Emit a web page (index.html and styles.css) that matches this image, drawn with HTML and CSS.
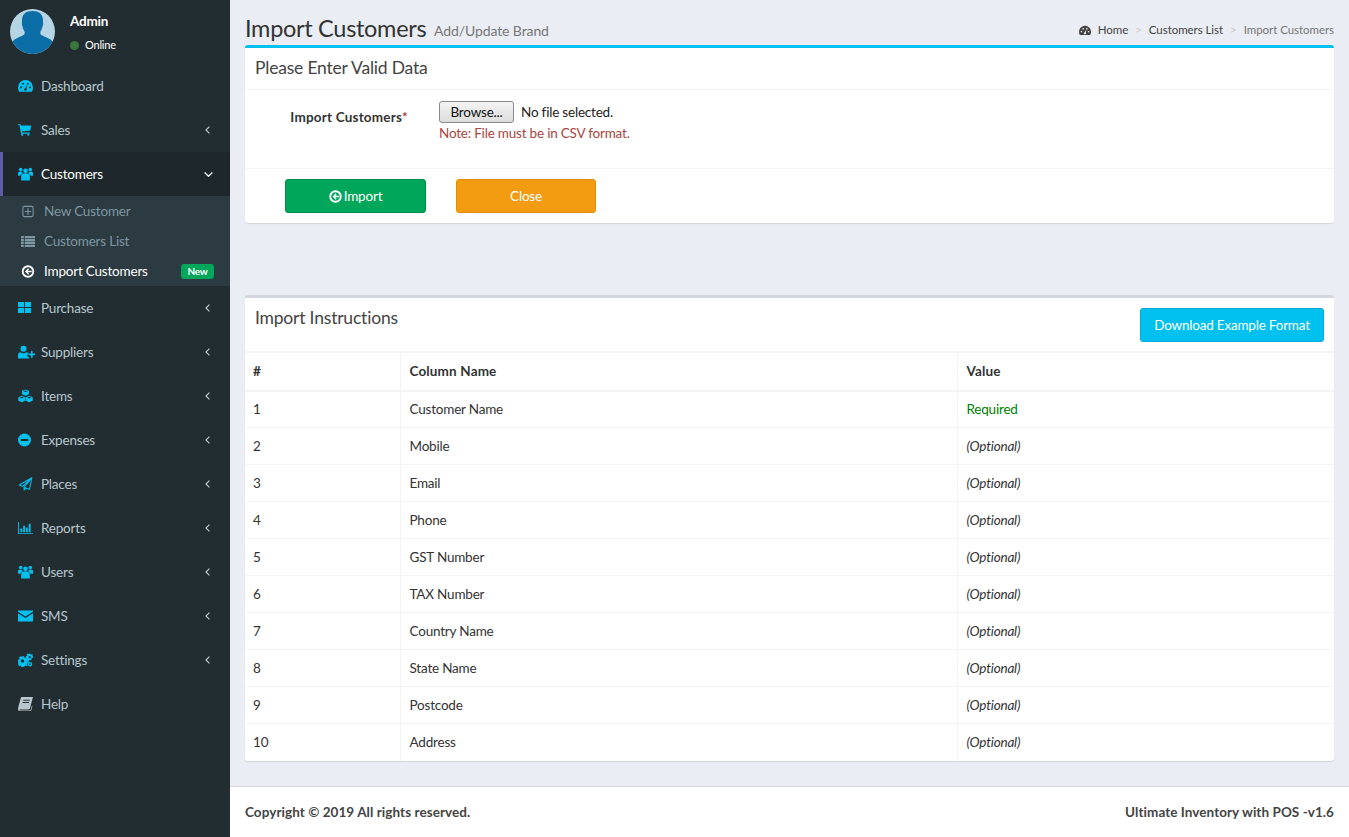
FILE: index.html
```html
<!DOCTYPE html>
<html lang="en">
<head>
    <meta charset="UTF-8">
    <meta name="viewport" content="width=device-width, initial-scale=1.0">
    <title>Import Customers</title>
    <link rel="stylesheet" href="styles.css">
</head>
<body>

    <!-- icon sprite -->
    <svg class="sprite" xmlns="http://www.w3.org/2000/svg">
        <symbol id="i-dash" viewBox="0 0 16 14"><path fill-rule="evenodd" d="M8 .5A8 8 0 0 0 0 8.500c0 1.700.4 3.200 1.100 4.500h13.800c.7-1.300 1.100-2.800 1.100-4.500a8 8 0 0 0-8-8zM2.400 7.600h1.800v1.800H2.400zM4.600 3.700h1.800v1.800H4.600zM9.600 3.700h1.800v1.800H9.600zM11.800 7.600h1.800v1.800h-1.800zM6.600 11.200c.5 1 2.200 1 2.700 0 .3-.6.100-1.100-.2-1.500L10 5 7.700 9.300c-.8 0-1.500 1-1.100 1.900z"/></symbol>
        <symbol id="i-cart" viewBox="0 -1 18 16"><path d="M0 0h3l.5 1.600H16l-1.200 6L4.600 8.700l.3 1.300H14v1.400H3.600L1.800 1.400H0z"/><circle cx="5" cy="12.700" r="1.300"/><circle cx="12.400" cy="12.700" r="1.300"/></symbol>
        <symbol id="i-users" viewBox="0 0 16 14"><circle cx="8" cy="3.600" r="2.500"/><circle cx="2.900" cy="2.300" r="1.900"/><circle cx="13.100" cy="2.300" r="1.900"/><path d="M3.400 13.800V9c0-1.500 1-2.600 2.400-2.600h4.400c1.400 0 2.400 1.100 2.400 2.600v4.800z"/><path d="M0 8.800V6c0-1 .7-1.500 1.600-1.500h2.500c.3 .8.700 1.300 1.200 1.600-1.500.5-2.500 1.500-2.600 2.700zM16 8.800V6c0-1-.7-1.500-1.600-1.500h-2.500c-.3 .8-.7 1.300-1.200 1.600 1.500.5 2.500 1.500 2.600 2.700z"/></symbol>
        <symbol id="i-plus-o" viewBox="-1 -1 16 16"><rect x=".7" y=".7" width="12.600" height="12.600" rx="2" fill="none" stroke="currentColor" stroke-width="1.300"/><path d="M6.300 3h1.400v3.300H11v1.400H7.700V11H6.300V7.700H3V6.300h3.300z"/></symbol>
        <symbol id="i-list" viewBox="0 0 15 12"><path d="M0 0h3v2.400H0zM4 0h11v2.400H4zM0 3.200h3v2.400H0zM4 3.200h11v2.400H4zM0 6.400h3v2.400H0zM4 6.400h11v2.400H4zM0 9.600h3V12H0zM4 9.600h11V12H4z"/></symbol>
        <symbol id="i-back" viewBox="0 0 14 14"><circle cx="7" cy="7" r="5.700" fill="none" stroke="currentColor" stroke-width="2"/><path d="M7.200 3.600l1 1-1.500 1.500H11v1.800H6.700l1.500 1.500-1 1L3.800 7z"/></symbol>
        <symbol id="i-grid" viewBox="0 -1 15 14"><path d="M0 0h6.100v5.100H0zM7 0h6.100v5.100H7zM0 6h6.100v5.100H0zM7 6h6.100v5.100H7z"/></symbol>
        <symbol id="i-user-plus" viewBox="0 0 17 13"><circle cx="5.500" cy="3.200" r="3"/><path d="M0 13V9.500c0-1.700 1-2.800 2.500-2.800.8.600 1.800 1 3 1s2.200-.4 3-1c1.100 0 2 .6 2.400 1.600H9.500v3h1.500V13z"/><path d="M13 5.500h1.600v2.600H17v1.600h-2.400v2.600H13V9.700h-2.600V8.100H13z"/></symbol>
        <symbol id="i-cubes" viewBox="0 0 16 14"><path fill-rule="evenodd" d="M8 0l3.700 1.500v3.700L8 6.800 4.300 5.200V1.500zM8 1L5.700 1.900 8 2.800l2.300-.9zM4 6.800l3.700 1.500V12L4 13.600.3 12V8.300zM4 7.800l-2.300.9 2.300.9 2.300-.9zM12 6.800l3.700 1.500V12L12 13.600 8.300 12V8.300zM12 7.800l-2.300.9 2.300.9 2.300-.9z"/></symbol>
        <symbol id="i-minus" viewBox="0 -.5 15 14"><path fill-rule="evenodd" d="M6.500 0a6.500 6.500 0 1 0 0 13 6.500 6.500 0 0 0 0-13zM2.800 5.400h7.400v2.200H2.800z"/></symbol>
        <symbol id="i-plane" viewBox="0 0 15 15"><path fill="none" stroke="currentColor" stroke-width="1.100" stroke-linejoin="round" d="M14.300.8L.8 8.600l3.700 1.500L14.300.8 6 11l5.800 2.300zM6 11v3l1.800-2.200"/></symbol>
        <symbol id="i-bars" viewBox="0 0 16 13"><path d="M0 0h1v12h15v1H0z"/><path d="M2.500 7h2v4h-2zM5.500 4h2v7h-2zM8.500 6h2v5h-2zM11.500 2h2v9h-2z"/></symbol>
        <symbol id="i-mail" viewBox="0 0 15 11"><path d="M0 0h15v1.300L7.500 6 0 1.300zM0 2.800l7.500 4.700L15 2.800V11H0z"/></symbol>
        <symbol id="i-cogs" viewBox="0 0 16 14"><path fill-rule="evenodd" d="M5.500 3l1 .1.400 1.200 1 .5 1.100-.6 1.300 1.300-.6 1.100.5 1 1.200.4v1.800l-1.200.4-.5 1 .6 1.100-1.300 1.300-1.100-.6-1 .5-.4 1.200H3.700l-.4-1.200-1-.5-1.100.6L-.1 11.300l.6-1.100-.5-1L0 8.900V7.100l.1-.3 1.100-.4.5-1-.6-1.100L2.400 3l1.100.6 1-.5zM4.700 6.200a1.800 1.800 0 1 0 0 3.600 1.800 1.800 0 0 0 0-3.600z"/><path fill-rule="evenodd" d="M13 0l.4 1 .9.100.7-.6.800.8-.6.9.3.8L16 3.300v1.200l-1.500.3-.3.8.6.9-.8.8-.9-.6-.8.3-.3 1h-1.200l-.3-1-.8-.3-.7.5-.9-.8.6-.9-.3-.8L8.500 3.600V3l1.100-.4.3-.8-.6-.9.8-.8.9.6.8-.3L12 0zM12.500 2.800a1.100 1.100 0 1 0 0 2.200 1.100 1.100 0 0 0 0-2.200zM12.800 9a2.400 2.400 0 1 0 0 4.800 2.400 2.400 0 0 0 0-4.800zM12.800 10.500a.9.9 0 1 1 0 1.800.9.9 0 0 1 0-1.800z"/></symbol>
        <symbol id="i-book" viewBox="0 0 14 13"><path fill-rule="evenodd" d="M3.500 0H14l-.3 1-2.500 9.500c-.2.8-.8 1.100-1.500 1.100H2c-.5 0-.9.300-.8.600.1.200.3.300.8.300h9.600l1.100-4 .8-.2-1.600 5.700H1.800C.7 13.100 0 12.200 0 11c0-.2 0-.5.100-.7L2.600 1C2.700.5 3 0 3.500 0zM5 2.600l-.2.800h6l.2-.8zM4.400 4.700l-.2.800h6l.2-.8z"/></symbol>
        <symbol id="i-left" viewBox="0 0 5 8"><path d="M4.400 .6L1 4l3.400 3.400" fill="none" stroke="currentColor" stroke-width="1.200"/></symbol>
        <symbol id="i-down" viewBox="0 0 9 5"><path d="M.6 .6L4.500 4.200 8.400 .6" fill="none" stroke="currentColor" stroke-width="1.300"/></symbol>
    </svg>

    <div class="wrapper">
        <aside class="sidebar">
            <div class="user-panel">
                <svg class="avatar" viewBox="0 0 45 45">
                    <circle cx="22.500" cy="22.500" r="22.500" fill="#b5d4e4"/>
                    <path fill="#0b6ea6" d="M22.500 2c6.500 0 10.500 3 10.500 9.500 0 3 .5 4-.5 6-.5 2-1 3.500-2 5-.5 1.500 0 3 1 3.500 2 1.500 6 2.500 9 4.500 .8 .6 1.400 1.500 1.900 2.500A22.500 22.500 0 0 1 2.600 33c.5-1 1.100-1.900 1.900-2.500 3-2 7-3 9-4.500 1-.5 1.500-2 1-3.500-1-1.500-1.500-3-2-5-1-2-.5-3-.5-6 0-6.500 4-9.500 10.500-9.500z"/>
                </svg>
                <div class="user-info">
                    <div class="user-name">Admin</div>
                    <div class="user-status"><span class="dot"></span>Online</div>
                </div>
            </div>

            <ul class="menu">
                <li class="menu-item"><svg class="icon"><use href="#i-dash"/></svg><span class="label">Dashboard</span></li>
                <li class="menu-item"><svg class="icon"><use href="#i-cart"/></svg><span class="label">Sales</span><svg class="chev"><use href="#i-left"/></svg></li>
                <li class="menu-item active"><svg class="icon"><use href="#i-users"/></svg><span class="label">Customers</span><svg class="chev-down"><use href="#i-down"/></svg></li>
                <li>
                    <ul class="submenu">
                        <li class="sub-item"><svg class="sub-icon"><use href="#i-plus-o"/></svg><span class="label">New Customer</span></li>
                        <li class="sub-item"><svg class="sub-icon"><use href="#i-list"/></svg><span class="label">Customers List</span></li>
                        <li class="sub-item current"><svg class="sub-icon"><use href="#i-back"/></svg><span class="label">Import Customers</span><span class="badge">New</span></li>
                    </ul>
                </li>
                <li class="menu-item"><svg class="icon"><use href="#i-grid"/></svg><span class="label">Purchase</span><svg class="chev"><use href="#i-left"/></svg></li>
                <li class="menu-item"><svg class="icon icon-wide"><use href="#i-user-plus"/></svg><span class="label">Suppliers</span><svg class="chev"><use href="#i-left"/></svg></li>
                <li class="menu-item"><svg class="icon"><use href="#i-cubes"/></svg><span class="label">Items</span><svg class="chev"><use href="#i-left"/></svg></li>
                <li class="menu-item"><svg class="icon"><use href="#i-minus"/></svg><span class="label">Expenses</span><svg class="chev"><use href="#i-left"/></svg></li>
                <li class="menu-item"><svg class="icon"><use href="#i-plane"/></svg><span class="label">Places</span><svg class="chev"><use href="#i-left"/></svg></li>
                <li class="menu-item"><svg class="icon"><use href="#i-bars"/></svg><span class="label">Reports</span><svg class="chev"><use href="#i-left"/></svg></li>
                <li class="menu-item"><svg class="icon"><use href="#i-users"/></svg><span class="label">Users</span><svg class="chev"><use href="#i-left"/></svg></li>
                <li class="menu-item"><svg class="icon"><use href="#i-mail"/></svg><span class="label">SMS</span><svg class="chev"><use href="#i-left"/></svg></li>
                <li class="menu-item"><svg class="icon"><use href="#i-cogs"/></svg><span class="label">Settings</span><svg class="chev"><use href="#i-left"/></svg></li>
                <li class="menu-item help"><svg class="icon"><use href="#i-book"/></svg><span class="label">Help</span></li>
            </ul>
        </aside>

        <div class="main">
            <div class="content">
                <div class="content-header">
                    <h1>Import Customers <small>Add/Update Brand</small></h1>
                    <div class="breadcrumb">
                        <svg class="crumb-icon"><use href="#i-dash"/></svg>
                        <span class="crumb">Home</span>
                        <span class="sep">&gt;</span>
                        <span class="crumb">Customers List</span>
                        <span class="sep">&gt;</span>
                        <span class="crumb last">Import Customers</span>
                    </div>
                </div>

                <section class="box box-info">
                    <div class="box-header"><h3>Please Enter Valid Data</h3></div>
                    <div class="box-body form-row">
                        <div class="form-label">Import Customers<span class="req">*</span></div>
                        <div class="form-field">
                            <div class="file-row"><button class="browse" type="button">Browse...</button><span>No file selected.</span></div>
                            <div class="note">Note: File must be in CSV format.</div>
                        </div>
                    </div>
                    <div class="box-footer">
                        <button class="btn btn-green" type="button"><svg class="btn-icon"><use href="#i-back"/></svg>Import</button>
                        <button class="btn btn-orange" type="button">Close</button>
                    </div>
                </section>

                <section class="box box-plain">
                    <div class="box-header head-split">
                        <h3>Import Instructions</h3>
                        <button class="btn-download" type="button">Download Example Format</button>
                    </div>
                    <table class="grid">
                        <colgroup><col class="col-a"><col class="col-b"><col></colgroup>
                        <thead>
                            <tr><th>#</th><th>Column Name</th><th>Value</th></tr>
                        </thead>
                        <tbody>
                            <tr><td>1</td><td>Customer Name</td><td class="required">Required</td></tr>
                            <tr><td>2</td><td>Mobile</td><td class="optional">(Optional)</td></tr>
                            <tr><td>3</td><td>Email</td><td class="optional">(Optional)</td></tr>
                            <tr><td>4</td><td>Phone</td><td class="optional">(Optional)</td></tr>
                            <tr><td>5</td><td>GST Number</td><td class="optional">(Optional)</td></tr>
                            <tr><td>6</td><td>TAX Number</td><td class="optional">(Optional)</td></tr>
                            <tr><td>7</td><td>Country Name</td><td class="optional">(Optional)</td></tr>
                            <tr><td>8</td><td>State Name</td><td class="optional">(Optional)</td></tr>
                            <tr><td>9</td><td>Postcode</td><td class="optional">(Optional)</td></tr>
                            <tr><td>10</td><td>Address</td><td class="optional">(Optional)</td></tr>
                        </tbody>
                    </table>
                </section>
            </div>

            <footer class="footer">
                <strong>Copyright © 2019 All rights reserved.</strong>
                <strong>Ultimate Inventory with POS -v1.6</strong>
            </footer>
        </div>
    </div>

</body>
</html>
```

FILE: styles.css
```css
* {
    box-sizing: border-box;
}
body {
    margin: 0;
    font-family: Lato, "Open Sans", sans-serif;
    font-size: 13.5px;
    letter-spacing: -0.2px;
    line-height: 20px;
    color: #333;
    background-color: #eaedf3;
}
ul {
    list-style: none;
    margin: 0;
    padding: 0;
}
svg {
    fill: currentColor;
}
.sprite {
    display: none;
}
.wrapper {
    display: flex;
    min-height: 837px;
}

/* sidebar */
.sidebar {
    width: 230px;
    flex-shrink: 0;
    background-color: #222d32;
    color: #b8c7ce;
}
.user-panel {
    height: 64px;
    display: flex;
    padding: 9px 0 0 10px;
}
.avatar {
    width: 45px;
    height: 45px;
}
.user-info {
    margin-left: 15px;
    color: #fff;
}
.user-name {
    font-weight: 700;
    line-height: 18px;
    margin-top: 3px;
}
.user-status {
    display: flex;
    align-items: center;
    font-size: 11px;
    line-height: 16px;
    margin-top: 7px;
}
.dot {
    width: 9px;
    height: 9px;
    border-radius: 50%;
    background-color: #3c763d;
    margin-right: 6px;
}
.menu-item {
    height: 44px;
    display: flex;
    align-items: center;
    padding-left: 18px;
}
.menu-item .label {
    flex: 1;
    margin-left: 8px;
}
.icon {
    width: 15px;
    height: 14px;
    color: #00c0ef;
    flex-shrink: 0;
}
.icon-wide {
    width: 17px;
    margin-right: -2px;
}
.help .icon {
    color: #b8c7ce;
}
.chev {
    width: 5px;
    height: 8px;
    margin-right: 20px;
}
.chev-down {
    width: 9px;
    height: 5px;
    margin-right: 17px;
}
.menu-item.active {
    background-color: #1e282c;
    color: #fff;
    border-left: 3px solid #605ca8;
    padding-left: 15px;
}
.submenu {
    background-color: #2c3b41;
    height: 90px;
}
.sub-item {
    height: 30px;
    display: flex;
    align-items: center;
    padding-left: 21px;
    color: #7f97a3;
}
.sub-item .label {
    flex: 1;
    margin-left: 9px;
}
.sub-icon {
    width: 14px;
    height: 13px;
    flex-shrink: 0;
}
.sub-item.current {
    color: #fff;
}
.badge {
    width: 33px;
    height: 15px;
    margin-right: 16px;
    border-radius: 3px;
    background-color: #00a65a;
    color: #fff;
    font-size: 10px;
    font-weight: 700;
    line-height: 15px;
    text-align: center;
}

/* main column */
.main {
    flex: 1;
    display: flex;
    flex-direction: column;
    min-width: 0;
}
.content {
    flex: 1;
    padding: 0 15px;
}
.content-header {
    height: 45px;
    display: flex;
    justify-content: space-between;
    align-items: flex-start;
}
h1 {
    margin: 11px 0 0;
    font-size: 23.5px;
    font-weight: 400;
    letter-spacing: -0.3px;
    line-height: 34px;
}
h1 small {
    font-size: 14px;
    letter-spacing: -0.1px;
    color: #777;
    margin-left: 2px;
    position: relative;
    top: -1px;
}
.breadcrumb {
    display: flex;
    align-items: center;
    font-size: 11.500px;
    letter-spacing: -0.05px;
    color: #444;
    margin-top: 20px;
}
.crumb-icon {
    width: 12px;
    height: 11px;
    margin-right: 7px;
}
.sep {
    color: #ccc;
    margin: 0 7px;
}
.crumb.last {
    color: #777;
}

/* boxes */
.box {
    background-color: #fff;
    border-top: 3px solid #d2d6de;
    border-radius: 3px;
    box-shadow: 0 1px 1px rgba(0, 0, 0, 0.1);
}
.box-info {
    border-top-color: #00c0ef;
    height: 178px;
}
.box-plain {
    margin-top: 72px;
}
.box-header {
    height: 42px;
    padding: 10px;
    border-bottom: 1px solid #f4f4f4;
}
h3 {
    margin: 0;
    font-size: 17.500px;
    font-weight: 400;
    line-height: 20px;
    color: #444;
}
.form-row {
    display: flex;
    height: 79px;
    padding-top: 11px;
    border-bottom: 1px solid #f4f4f4;
}
.form-label {
    width: 163px;
    text-align: right;
    font-weight: 700;
    letter-spacing: 0.2px;
    padding-top: 6px;
}
.req {
    color: #a94442;
}
.form-field {
    margin-left: 31px;
}
.file-row {
    display: flex;
    align-items: center;
    gap: 7px;
    color: #222;
}
.browse {
    width: 75px;
    height: 22px;
    padding: 0 0 1px;
    font: inherit;
    letter-spacing: inherit;
    color: #111;
    background: linear-gradient(#f4f4f4, #dcdcdc);
    border: 1px solid #8a8a8a;
    border-radius: 3px;
}
.note {
    color: #a94442;
}
.box-footer {
    display: flex;
    padding: 10px 0 0 40px;
    gap: 30px;
}
.btn {
    width: 141px;
    height: 34px;
    padding: 0 0 1px;
    font: inherit;
    letter-spacing: inherit;
    color: #fff;
    border-radius: 3px;
    border: 1px solid transparent;
}
.btn-icon {
    width: 13px;
    height: 13px;
    margin-right: 2px;
    vertical-align: -2px;
}
.btn-green {
    background-color: #00a65a;
    border-color: #008d4c;
}
.btn-orange {
    width: 140px;
    background-color: #f39c12;
    border-color: #e08e0b;
}
.head-split {
    height: 54px;
    display: flex;
    justify-content: space-between;
    align-items: flex-start;
    padding-right: 10px;
}
.btn-download {
    height: 34px;
    width: 184px;
    padding: 0 0 1px;
    font: inherit;
    letter-spacing: inherit;
    color: #fff;
    background-color: #00c0ef;
    border: 1px solid #00acd6;
    border-radius: 3px;
}

/* table */
.grid {
    width: 100%;
    border-collapse: collapse;
    table-layout: fixed;
}
.col-a {
    width: 155px;
}
.col-b {
    width: 557px;
}
.grid th,
.grid td {
    height: 37px;
    padding: 0 8px 0 9px;
    text-align: left;
    border: 1px solid #f4f4f4;
}
.grid th {
    height: 38px;
    letter-spacing: 0.15px;
    border-bottom-width: 2px;
}
.grid tr > :first-child {
    padding-left: 8px;
    border-left: 0;
}
.grid tr > :last-child {
    border-right: 0;
}
.grid tbody tr:last-child td {
    border-bottom: 0;
}
.required {
    color: green;
}
.optional {
    font-style: italic;
}

/* footer */
.footer {
    height: 51px;
    margin-top: 25px;
    padding: 0 15px;
    display: flex;
    justify-content: space-between;
    align-items: center;
    background-color: #fff;
    border-top: 1px solid #d2d6de;
    color: #444;
    letter-spacing: 0.06px;
}
```
